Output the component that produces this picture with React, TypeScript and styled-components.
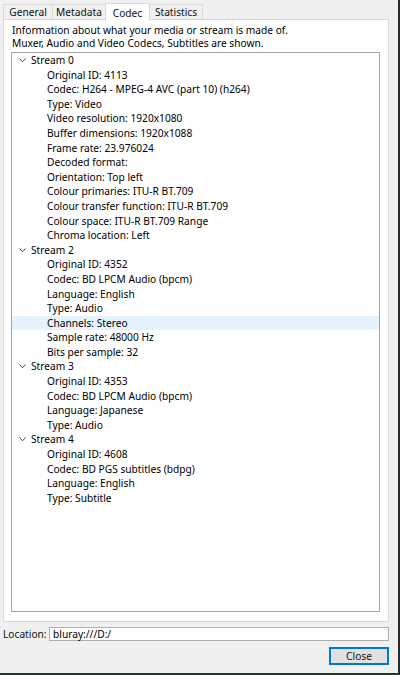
import React from 'react';
import styled, { createGlobalStyle } from 'styled-components';

interface Stream {
  name: string;
  props: string[];
}

const GlobalStyle = createGlobalStyle`
  html, body {
    margin: 0;
    padding: 0;
    background: #f0f0f0;
  }
  * {
    box-sizing: border-box;
  }
`;

const Window = styled.div`
  width: 400px;
  height: 675px;
  background: #f0f0f0;
  border-right: 2px solid #2a2a2a;
  border-bottom: 2px solid #1d3a2c;
  font-family: "Noto Sans", "Open Sans", sans-serif;
  font-size: 10.2px;
  color: #000;
  display: flex;
  flex-direction: column;
  overflow: hidden;
`;

const TabBar = styled.div`
  display: flex;
  align-items: flex-end;
  height: 20px;
  padding-left: 4px;
`;

const Tab = styled.div<{ active?: boolean; w: number }>`
  width: ${p => p.w}px;
  height: ${p => (p.active ? 18 : 16)}px;
  margin-bottom: ${p => (p.active ? -1 : 0)}px;
  background: ${p => (p.active ? '#fff' : '#f0f0f0')};
  border: 1px solid #d9d9d9;
  border-bottom: ${p => (p.active ? 'none' : '1px solid #d9d9d9')};
  margin-left: -1px;
  display: flex;
  align-items: center;
  justify-content: center;
  position: relative;
  z-index: ${p => (p.active ? 2 : 1)};
  color: #111;
`;

const Pane = styled.div`
  width: 386px;
  height: 603px;
  margin-left: 3px;
  margin-top: -1px;
  background: #fff;
  border: 1px solid #d9d9d9;
  display: flex;
  flex-direction: column;
  padding: 4px 8px 9px 7px;
`;

const Info = styled.div`
  line-height: 12.5px;
  padding-left: 1px;
  height: 28px;
`;

const TreeBox = styled.div`
  flex: 1;
  border: 1px solid #a6a6a6;
  background: #fff;
`;

const Row = styled.div<{ level: number; hover?: boolean }>`
  height: 14.6px;
  line-height: 14.6px;
  display: flex;
  align-items: center;
  padding-left: ${p => (p.level === 0 ? 7 : 35)}px;
  background: ${p => (p.hover ? '#e5f3ff' : 'transparent')};
  white-space: nowrap;
`;

const Chevron = styled.svg`
  width: 7px;
  height: 5px;
  margin-right: 5px;
  flex: none;
`;

const LocationRow = styled.div`
  display: flex;
  align-items: center;
  margin-top: 4px;
  height: 15px;
  padding-left: 3px;
`;

const Label = styled.span`
  width: 46px;
  color: #111;
`;

const Input = styled.div`
  width: 340px;
  height: 14px;
  border: 1px solid #adadad;
  background: #fff;
  padding-left: 3px;
  line-height: 12px;
`;

const ButtonRow = styled.div`
  display: flex;
  justify-content: flex-end;
  padding-right: 9px;
  margin-top: 6px;
`;

const Button = styled.div`
  width: 60px;
  height: 18px;
  background: #e1e1e1;
  border: 1px solid #0078d7;
  box-shadow: inset 0 0 0 1px #0078d7;
  display: flex;
  align-items: center;
  justify-content: center;
  color: #111;
`;

const streams: Stream[] = [
  {
    name: 'Stream 0',
    props: [
      'Original ID: 4113',
      'Codec: H264 - MPEG-4 AVC (part 10) (h264)',
      'Type: Video',
      'Video resolution: 1920x1080',
      'Buffer dimensions: 1920x1088',
      'Frame rate: 23.976024',
      'Decoded format:',
      'Orientation: Top left',
      'Colour primaries: ITU-R BT.709',
      'Colour transfer function: ITU-R BT.709',
      'Colour space: ITU-R BT.709 Range',
      'Chroma location: Left',
    ],
  },
  {
    name: 'Stream 2',
    props: [
      'Original ID: 4352',
      'Codec: BD LPCM Audio (bpcm)',
      'Language: English',
      'Type: Audio',
      'Channels: Stereo',
      'Sample rate: 48000 Hz',
      'Bits per sample: 32',
    ],
  },
  {
    name: 'Stream 3',
    props: [
      'Original ID: 4353',
      'Codec: BD LPCM Audio (bpcm)',
      'Language: Japanese',
      'Type: Audio',
    ],
  },
  {
    name: 'Stream 4',
    props: [
      'Original ID: 4608',
      'Codec: BD PGS subtitles (bdpg)',
      'Language: English',
      'Type: Subtitle',
    ],
  },
];

const tabs = [
  { label: 'General', w: 50 },
  { label: 'Metadata', w: 54 },
  { label: 'Codec', w: 45, active: true },
  { label: 'Statistics', w: 54 },
];

export default function App() {
  return (
    <>
      <GlobalStyle />
      <Window>
        <TabBar>
          {tabs.map(t => (
            <Tab key={t.label} w={t.w} active={t.active}>
              {t.label}
            </Tab>
          ))}
        </TabBar>
        <Pane>
          <Info>
            Information about what your media or stream is made of.
            <br />
            Muxer, Audio and Video Codecs, Subtitles are shown.
          </Info>
          <TreeBox>
            {streams.map(s => (
              <React.Fragment key={s.name}>
                <Row level={0}>
                  <Chevron viewBox="0 0 7 5">
                    <polyline points="0.5,0.5 3.5,3.8 6.5,0.5" fill="none" stroke="#444" strokeWidth="1" />
                  </Chevron>
                  {s.name}
                </Row>
                {s.props.map(p => (
                  <Row key={p} level={1} hover={p === 'Channels: Stereo'}>
                    {p}
                  </Row>
                ))}
              </React.Fragment>
            ))}
          </TreeBox>
        </Pane>
        <LocationRow>
          <Label>Location:</Label>
          <Input>bluray:///D:/</Input>
        </LocationRow>
        <ButtonRow>
          <Button>Close</Button>
        </ButtonRow>
      </Window>
    </>
  );
}
